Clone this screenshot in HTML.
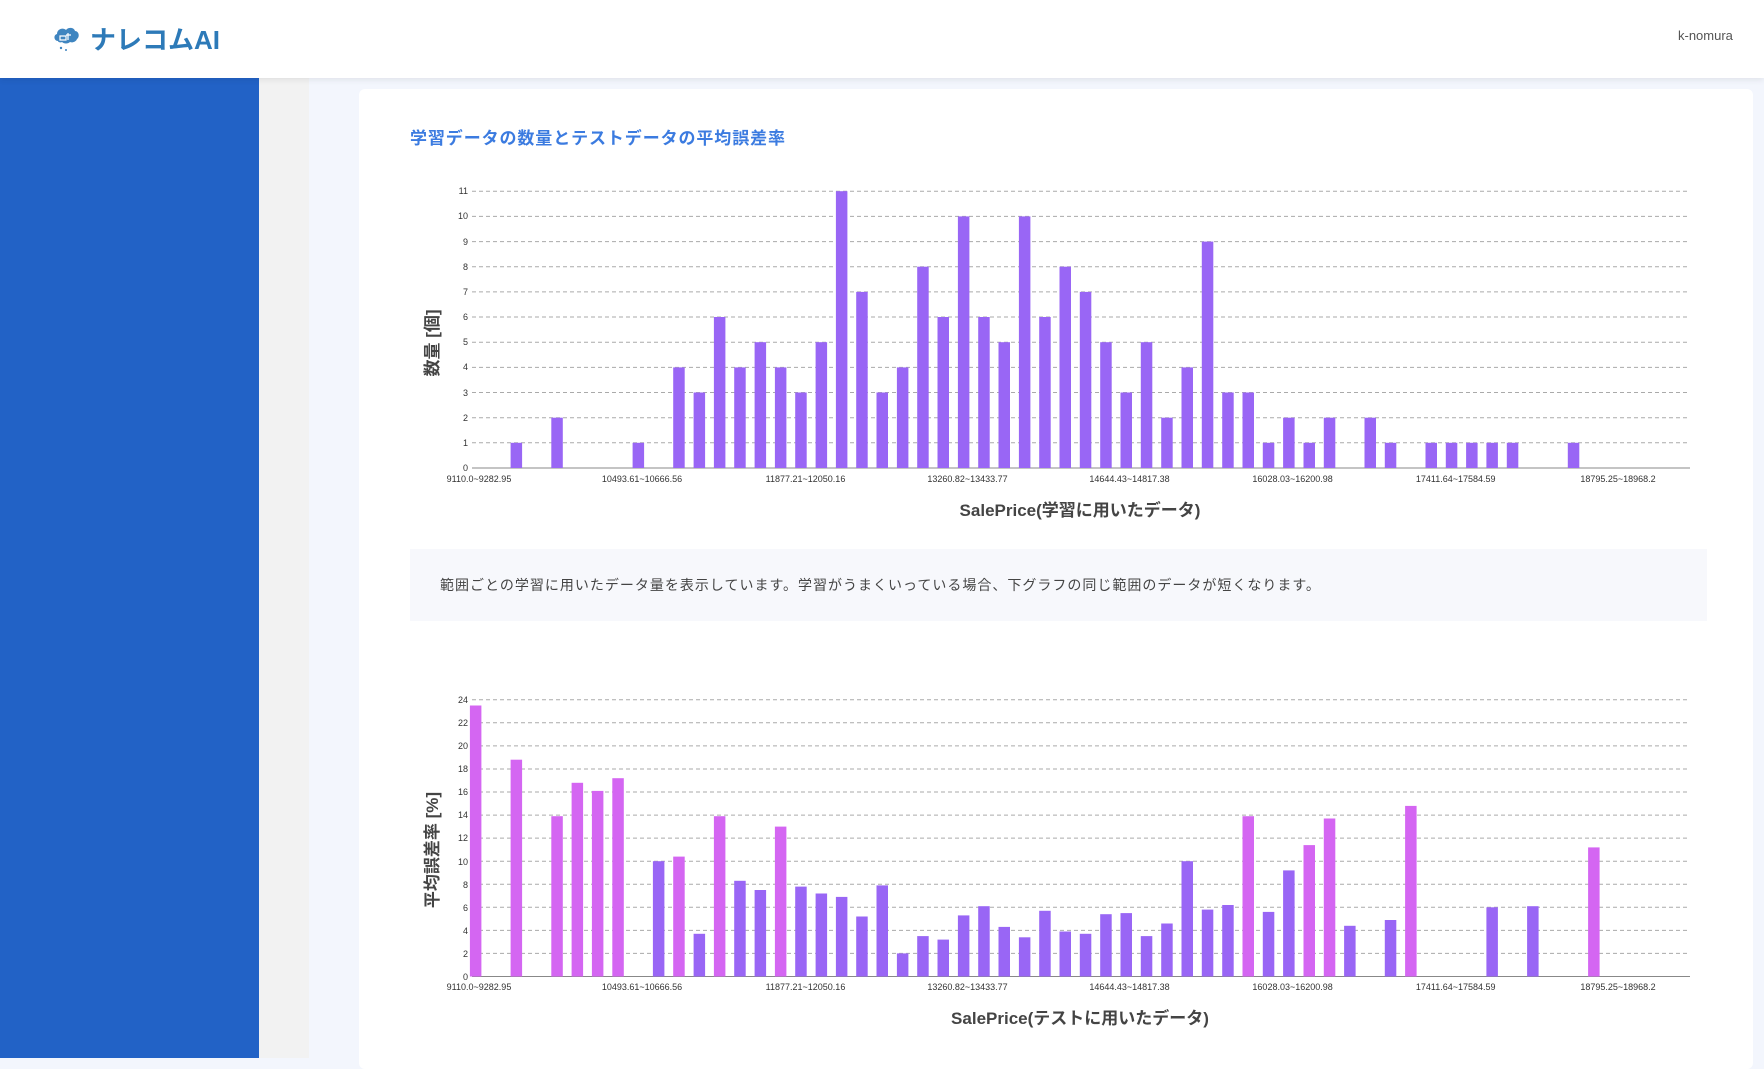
<!DOCTYPE html>
<html><head><meta charset="utf-8"><style>
*{margin:0;padding:0;box-sizing:border-box}
body{width:1764px;height:1038px;overflow:hidden;background:#f3f6fd;font-family:"Liberation Sans","Noto Sans CJK JP",sans-serif;position:relative}
.hdr{position:absolute;left:0;top:0;width:1764px;height:78px;background:#fff;box-shadow:0 2px 6px rgba(0,0,0,.08);z-index:2}
.side{position:absolute;left:0;top:78px;width:259px;height:980px;background:#2262c6}
.gray{position:absolute;left:259px;top:78px;width:50px;height:980px;background:#f2f2f2}
.card{position:absolute;left:359px;top:89px;width:1394px;height:980px;background:#fff;border-radius:6px}
.title{position:absolute;left:410px;top:124px;font-size:17px;font-weight:bold;color:#3b7be0;letter-spacing:.9px}
.info{position:absolute;left:410px;top:549px;width:1297px;height:72px;background:#f7f8fc;font-size:14px;color:#444;padding:26px 0 0 30px;letter-spacing:1px}
.logo{position:absolute;left:90px;top:20px;font-size:26px;font-weight:bold;color:#2d7ab8;letter-spacing:0}
.user{position:absolute;left:1678px;top:28px;font-size:13px;color:#555}
</style></head><body>
<div class="hdr">
<svg style="position:absolute;left:52px;top:23px" width="30" height="30" viewBox="0 0 30 30"><path d="M6 18c-4 0-5-6-1-7 0-5 6-7 9-4 2-3 8-3 9 1 4 0 5 6 2 8-1 3-5 4-7 3-2 2-6 2-8 0-2 1-4 0-4-1z" fill="#3f85c0"/><path d="M8 13h6v4h-6zM16 10v7M14 12h5" stroke="#fff" stroke-width="1.2" fill="none"/><circle cx="9" cy="25" r="1.2" fill="#3f85c0"/><circle cx="14" cy="27" r="1" fill="#3f85c0"/></svg>
<div class="logo">ナレコムAI</div>
<div class="user">k-nomura</div>
</div>
<div class="side"></div><div class="gray"></div>
<div class="card"></div>
<div class="title">学習データの数量とテストデータの平均誤差率</div>
<div class="info">範囲ごとの学習に用いたデータ量を表示しています。学習がうまくいっている場合、下グラフの同じ範囲のデータが短くなります。</div>
<svg style="position:absolute;left:0;top:0" width="1764" height="1038" font-family="Liberation Sans, sans-serif">
<g stroke="#aaa" stroke-dasharray="4,3" stroke-width="1">
<line x1="472" x2="1690" y1="442.8" y2="442.8"/><line x1="472" x2="1690" y1="417.7" y2="417.7"/><line x1="472" x2="1690" y1="392.5" y2="392.5"/><line x1="472" x2="1690" y1="367.4" y2="367.4"/><line x1="472" x2="1690" y1="342.2" y2="342.2"/><line x1="472" x2="1690" y1="317" y2="317"/><line x1="472" x2="1690" y1="291.9" y2="291.9"/><line x1="472" x2="1690" y1="266.7" y2="266.7"/><line x1="472" x2="1690" y1="241.6" y2="241.6"/><line x1="472" x2="1690" y1="216.4" y2="216.4"/><line x1="472" x2="1690" y1="191.2" y2="191.2"/>
</g>
<line x1="472" x2="1690" y1="468" y2="468" stroke="#888"/>
<g font-size="9" fill="#333" text-anchor="end">
<text x="468" y="471">0</text><text x="468" y="446">1</text><text x="468" y="421">2</text><text x="468" y="396">3</text><text x="468" y="370">4</text><text x="468" y="345">5</text><text x="468" y="320">6</text><text x="468" y="295">7</text><text x="468" y="270">8</text><text x="468" y="245">9</text><text x="468" y="219">10</text><text x="468" y="194">11</text>
</g>
<g transform="translate(0,468) scale(1,-1)" fill="#9966f5">
<rect x="510.6" width="11.5" height="25.2"/><rect x="551.3" width="11.5" height="50.3"/><rect x="632.6" width="11.5" height="25.2"/><rect x="673.2" width="11.5" height="100.6"/><rect x="693.6" width="11.5" height="75.5"/><rect x="713.9" width="11.5" height="151"/><rect x="734.2" width="11.5" height="100.6"/><rect x="754.6" width="11.5" height="125.8"/><rect x="774.9" width="11.5" height="100.6"/><rect x="795.2" width="11.5" height="75.5"/><rect x="815.6" width="11.5" height="125.8"/><rect x="835.9" width="11.5" height="276.8"/><rect x="856.2" width="11.5" height="176.1"/><rect x="876.5" width="11.5" height="75.5"/><rect x="896.9" width="11.5" height="100.6"/><rect x="917.2" width="11.5" height="201.3"/><rect x="937.5" width="11.5" height="151"/><rect x="957.9" width="11.5" height="251.6"/><rect x="978.2" width="11.5" height="151"/><rect x="998.5" width="11.5" height="125.8"/><rect x="1018.9" width="11.5" height="251.6"/><rect x="1039.2" width="11.5" height="151"/><rect x="1059.5" width="11.5" height="201.3"/><rect x="1079.8" width="11.5" height="176.1"/><rect x="1100.2" width="11.5" height="125.8"/><rect x="1120.5" width="11.5" height="75.5"/><rect x="1140.8" width="11.5" height="125.8"/><rect x="1161.2" width="11.5" height="50.3"/><rect x="1181.5" width="11.5" height="100.6"/><rect x="1201.8" width="11.5" height="226.4"/><rect x="1222.2" width="11.5" height="75.5"/><rect x="1242.5" width="11.5" height="75.5"/><rect x="1262.8" width="11.5" height="25.2"/><rect x="1283.1" width="11.5" height="50.3"/><rect x="1303.5" width="11.5" height="25.2"/><rect x="1323.8" width="11.5" height="50.3"/><rect x="1364.5" width="11.5" height="50.3"/><rect x="1384.8" width="11.5" height="25.2"/><rect x="1425.5" width="11.5" height="25.2"/><rect x="1445.8" width="11.5" height="25.2"/><rect x="1466.1" width="11.5" height="25.2"/><rect x="1486.4" width="11.5" height="25.2"/><rect x="1506.8" width="11.5" height="25.2"/><rect x="1567.8" width="11.5" height="25.2"/>
</g>
<g font-size="9" fill="#333" text-anchor="middle">
<text x="479" y="482">9110.0~9282.95</text><text x="642" y="482">10493.61~10666.56</text><text x="805.5" y="482">11877.21~12050.16</text><text x="967.5" y="482">13260.82~13433.77</text><text x="1129.5" y="482">14644.43~14817.38</text><text x="1292.6" y="482">16028.03~16200.98</text><text x="1455.7" y="482">17411.64~17584.59</text><text x="1618" y="482">18795.25~18968.2</text>
</g>
<text x="1080" y="516" font-size="17" font-weight="bold" fill="#444" text-anchor="middle" font-family="Liberation Sans, Noto Sans CJK JP, sans-serif">SalePrice(学習に用いたデータ)</text>
<text transform="translate(438,343) rotate(-90)" font-size="17" font-weight="bold" fill="#444" text-anchor="middle" font-family="Liberation Sans, Noto Sans CJK JP, sans-serif">数量 [個]</text>

<g stroke="#aaa" stroke-dasharray="4,3" stroke-width="1">
<line x1="472" x2="1690" y1="953.4" y2="953.4"/><line x1="472" x2="1690" y1="930.4" y2="930.4"/><line x1="472" x2="1690" y1="907.3" y2="907.3"/><line x1="472" x2="1690" y1="884.3" y2="884.3"/><line x1="472" x2="1690" y1="861.2" y2="861.2"/><line x1="472" x2="1690" y1="838.1" y2="838.1"/><line x1="472" x2="1690" y1="815.1" y2="815.1"/><line x1="472" x2="1690" y1="792" y2="792"/><line x1="472" x2="1690" y1="769" y2="769"/><line x1="472" x2="1690" y1="745.9" y2="745.9"/><line x1="472" x2="1690" y1="722.8" y2="722.8"/><line x1="472" x2="1690" y1="699.8" y2="699.8"/>
</g>
<line x1="472" x2="1690" y1="976.5" y2="976.5" stroke="#888"/>
<g font-size="9" fill="#333" text-anchor="end">
<text x="468" y="980">0</text><text x="468" y="957">2</text><text x="468" y="934">4</text><text x="468" y="911">6</text><text x="468" y="888">8</text><text x="468" y="865">10</text><text x="468" y="841">12</text><text x="468" y="818">14</text><text x="468" y="795">16</text><text x="468" y="772">18</text><text x="468" y="749">20</text><text x="468" y="726">22</text><text x="468" y="703">24</text>
</g>
<g transform="translate(0,976.5) scale(1,-1)">
<g fill="#d466f2">
<rect x="469.9" width="11.5" height="271"/><rect x="510.6" width="11.5" height="216.8"/><rect x="551.3" width="11.5" height="160.3"/><rect x="571.6" width="11.5" height="193.7"/><rect x="591.9" width="11.5" height="185.6"/><rect x="612.3" width="11.5" height="198.3"/><rect x="673.2" width="11.5" height="119.9"/><rect x="713.9" width="11.5" height="160.3"/><rect x="774.9" width="11.5" height="149.9"/><rect x="1242.5" width="11.5" height="160.3"/><rect x="1303.5" width="11.5" height="131.4"/><rect x="1323.8" width="11.5" height="158"/><rect x="1405.1" width="11.5" height="170.6"/><rect x="1588.1" width="11.5" height="129.1"/>
</g>
<g fill="#9966f5">
<rect x="652.9" width="11.5" height="115.3"/><rect x="693.6" width="11.5" height="42.7"/><rect x="734.2" width="11.5" height="95.7"/><rect x="754.6" width="11.5" height="86.5"/><rect x="795.2" width="11.5" height="89.9"/><rect x="815.6" width="11.5" height="83"/><rect x="835.9" width="11.5" height="79.6"/><rect x="856.2" width="11.5" height="60"/><rect x="876.5" width="11.5" height="91.1"/><rect x="896.9" width="11.5" height="23.1"/><rect x="917.2" width="11.5" height="40.4"/><rect x="937.5" width="11.5" height="36.9"/><rect x="957.9" width="11.5" height="61.1"/><rect x="978.2" width="11.5" height="70.3"/><rect x="998.5" width="11.5" height="49.6"/><rect x="1018.9" width="11.5" height="39.2"/><rect x="1039.2" width="11.5" height="65.7"/><rect x="1059.5" width="11.5" height="45"/><rect x="1079.8" width="11.5" height="42.7"/><rect x="1100.2" width="11.5" height="62.3"/><rect x="1120.5" width="11.5" height="63.4"/><rect x="1140.8" width="11.5" height="40.4"/><rect x="1161.2" width="11.5" height="53"/><rect x="1181.5" width="11.5" height="115.3"/><rect x="1201.8" width="11.5" height="66.9"/><rect x="1222.2" width="11.5" height="71.5"/><rect x="1262.8" width="11.5" height="64.6"/><rect x="1283.1" width="11.5" height="106.1"/><rect x="1344.1" width="11.5" height="50.7"/><rect x="1384.8" width="11.5" height="56.5"/><rect x="1486.4" width="11.5" height="69.2"/><rect x="1527.1" width="11.5" height="70.3"/>
</g>
</g>
<g font-size="9" fill="#333" text-anchor="middle">
<text x="479" y="990">9110.0~9282.95</text><text x="642" y="990">10493.61~10666.56</text><text x="805.5" y="990">11877.21~12050.16</text><text x="967.5" y="990">13260.82~13433.77</text><text x="1129.5" y="990">14644.43~14817.38</text><text x="1292.6" y="990">16028.03~16200.98</text><text x="1455.7" y="990">17411.64~17584.59</text><text x="1618" y="990">18795.25~18968.2</text>
</g>
<text x="1080" y="1024" font-size="17" font-weight="bold" fill="#444" text-anchor="middle" font-family="Liberation Sans, Noto Sans CJK JP, sans-serif">SalePrice(テストに用いたデータ)</text>
<text transform="translate(438,850) rotate(-90)" font-size="17" font-weight="bold" fill="#444" text-anchor="middle" font-family="Liberation Sans, Noto Sans CJK JP, sans-serif">平均誤差率 [%]</text>
</svg>
</body></html>
